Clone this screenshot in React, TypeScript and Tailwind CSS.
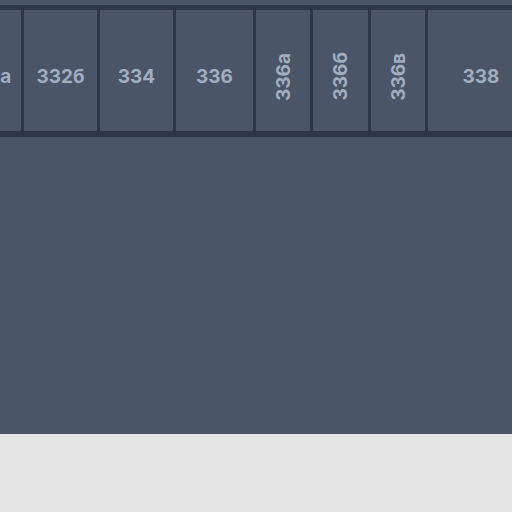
import React from "react";

type Cell = { label: string; w: number; vertical?: boolean };

const cells: Cell[] = [
  { label: "332а", w: 67 },
  { label: "332б", w: 73 },
  { label: "334", w: 73 },
  { label: "336", w: 77 },
  { label: "336а", w: 54, vertical: true },
  { label: "336б", w: 55, vertical: true },
  { label: "336в", w: 54, vertical: true },
  { label: "338", w: 106 },
];

export default function App() {
  return (
    <div className="w-[512px] h-[512px] overflow-hidden flex flex-col bg-[#e5e5e5]" style={{ fontFamily: "Inter, 'Liberation Sans', sans-serif" }}>
      <div className="h-[434px] bg-[#4a5568] pt-[5px] overflow-hidden">
        <div className="flex gap-[3px] bg-[#2d3748] pt-[5px] pb-[6px] -ml-[46px] w-max">
          {cells.map((c) => (
            <div
              key={c.label}
              className="h-[121px] bg-[#4a5568] flex items-center justify-center pt-[12px] shrink-0"
              style={{ width: c.w }}
            >
              {c.vertical ? (
                <span className="[writing-mode:vertical-rl] rotate-180 text-[19px] font-bold text-[#a0aec0] leading-none">
                  {c.label}
                </span>
              ) : (
                <span className="text-[19px] font-bold text-[#a0aec0] leading-none">{c.label}</span>
              )}
            </div>
          ))}
        </div>
      </div>
      <div className="flex-1 bg-[#e5e5e5]" />
    </div>
  );
}
